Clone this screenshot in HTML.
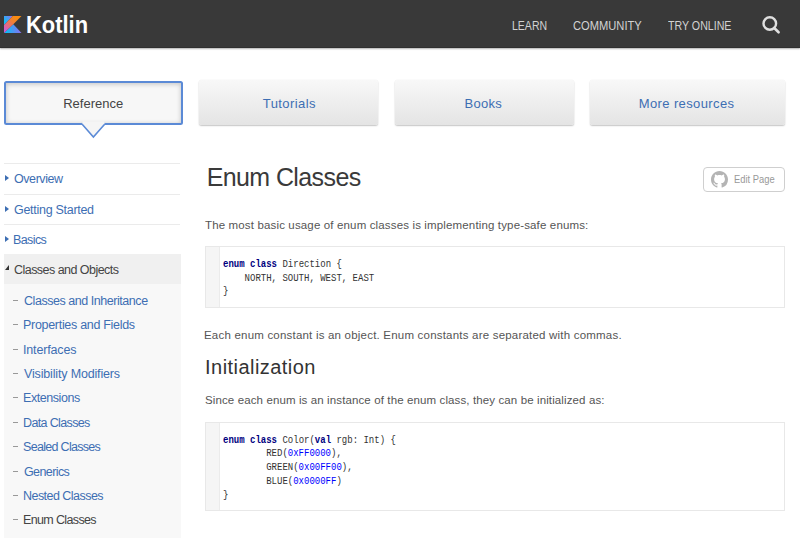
<!DOCTYPE html>
<html><head><meta charset="utf-8">
<style>
html,body{margin:0;padding:0;background:#fff;width:800px;height:538px;overflow:hidden;position:relative;font-family:"Liberation Sans",sans-serif;}
.t{position:absolute;white-space:pre;line-height:1;}
.code{position:absolute;white-space:pre;font-family:"Liberation Mono",monospace;font-size:10.5px;line-height:13.75px;color:#333;letter-spacing:0px;transform:scaleX(0.857);transform-origin:0 0;}
.kw{color:#000080;font-weight:700;}
.num{color:#0000ff;}
.box{position:absolute;box-sizing:border-box;}
#header{left:0;top:0;width:800px;height:48px;background:#393939;border-bottom:1px solid #303030;box-shadow:0 1px 1.5px rgba(0,0,0,.3);}
.logo{position:absolute;left:4px;top:16px;}
.search{position:absolute;left:761px;top:15px;}
.tab{top:80px;height:44.5px;border-radius:2.5px;background:linear-gradient(#f8f8f8,#e4e4e4);box-shadow:0 1px 1.5px rgba(0,0,0,.22),0 0 1px rgba(0,0,0,.12);}
#tab1{left:4px;top:81px;width:179px;height:44px;background:#f7f7f7;border:2px solid #5b8ad6;box-shadow:inset 0 1px 5px rgba(0,0,0,.22);}
.sep{position:absolute;left:4px;width:176px;height:1px;background:#ebebeb;}
.tri{position:absolute;width:0;height:0;}
.dash{position:absolute;left:12.6px;width:5px;height:1px;background:#999;}
.codebox{position:absolute;left:205px;width:580px;border:1px solid #e8e8e8;background:#fff;box-sizing:border-box;}
.gutter{position:absolute;left:0;top:0;bottom:0;width:13px;background:#f5f5f5;border-right:1px solid #ebebeb;}
#editbtn{left:703px;top:167px;width:82px;height:25px;border:1px solid #cfcfcf;border-radius:4px;}
.gh{position:absolute;left:711px;top:171px;}
</style></head><body>
<div class="box" id="header"></div>
<svg class="logo" width="17.5" height="17" viewBox="0 0 60 60" preserveAspectRatio="none">
<defs>
<linearGradient id="ga" x1="0" y1="45" x2="60" y2="45" gradientUnits="userSpaceOnUse"><stop offset=".15" stop-color="#12baf6"/><stop offset=".55" stop-color="#4d95f2"/><stop offset="1" stop-color="#8a6ef0"/></linearGradient>
<linearGradient id="gb" x1="0" y1="30" x2="30" y2="0" gradientUnits="userSpaceOnUse"><stop offset=".2" stop-color="#10bdf7"/><stop offset=".6" stop-color="#4a9af3"/><stop offset="1" stop-color="#9a6aee"/></linearGradient>
<linearGradient id="gc" x1="0" y1="60" x2="60" y2="0" gradientUnits="userSpaceOnUse"><stop offset=".1" stop-color="#c85bd8"/><stop offset=".3" stop-color="#df6a8c"/><stop offset=".55" stop-color="#ee7e3a"/><stop offset=".8" stop-color="#f88b10"/></linearGradient>
</defs>
<path fill="url(#ga)" d="M0 60L32 29.5L60 60z"/>
<path fill="url(#gb)" d="M0 0h30.1L0 32z"/>
<path fill="url(#gc)" d="M30.1 0L0 31.7V60L32 29.5L60 0z"/>
</svg>
<svg class="search" width="22" height="22" viewBox="0 0 22 22"><circle cx="8.8" cy="8.5" r="6.3" fill="none" stroke="#dfdfdf" stroke-width="2.4"/><line x1="13.2" y1="13" x2="17.6" y2="17.3" stroke="#dfdfdf" stroke-width="2.6" stroke-linecap="round"/></svg>
<div class="box tab" id="tab1"></div>
<svg style="position:absolute;left:0;top:0" width="200" height="140"><path d="M81.3 123.3 L93.4 137 L105.5 123.3" fill="#f5f5f5" stroke="#5b8ad6" stroke-width="1.6"/><rect x="82.6" y="121.5" width="21.8" height="2.6" fill="#f5f5f5"/></svg>
<div class="box tab" style="left:199.3px;width:179px;"></div>
<div class="box tab" style="left:394.5px;width:179.3px;"></div>
<div class="box tab" style="left:589.7px;width:195.3px;"></div>
<div class="sep" style="top:163px"></div>
<div class="sep" style="top:194px"></div>
<div class="sep" style="top:224px"></div>
<div class="box" style="left:4px;top:254px;width:176.5px;height:30px;background:#f0f0f0;"></div>
<div class="box" style="left:4px;top:284px;width:176.5px;height:260px;background:#f8f8f8;"></div>
<div class="tri" style="left:5px;top:175px;border-left:4px solid #3d6eb3;border-top:3px solid transparent;border-bottom:3px solid transparent;"></div>
<div class="tri" style="left:5px;top:206px;border-left:4px solid #3d6eb3;border-top:3px solid transparent;border-bottom:3px solid transparent;"></div>
<div class="tri" style="left:5px;top:236px;border-left:4px solid #3d6eb3;border-top:3px solid transparent;border-bottom:3px solid transparent;"></div>
<div class="tri" style="left:4.5px;top:265.2px;border-right:4.5px solid #333;border-top:5px solid transparent;"></div>
<div class="dash" style="top:300px"></div>
<div class="dash" style="top:324px"></div>
<div class="dash" style="top:349px"></div>
<div class="dash" style="top:373px"></div>
<div class="dash" style="top:397px"></div>
<div class="dash" style="top:422px"></div>
<div class="dash" style="top:446px"></div>
<div class="dash" style="top:471px"></div>
<div class="dash" style="top:495px"></div>
<div class="dash" style="top:519px"></div>
<div class="box" id="editbtn"></div>
<svg class="gh" width="17" height="17" viewBox="0 0 16 16"><path fill="#b4b4b4" d="M8 0C3.58 0 0 3.58 0 8c0 3.54 2.29 6.53 5.47 7.59.4.07.55-.17.55-.38 0-.19-.01-.82-.01-1.49-2.01.37-2.53-.49-2.69-.94-.09-.23-.48-.94-.82-1.13-.28-.15-.68-.52-.01-.53.63-.01 1.08.58 1.23.82.72 1.21 1.87.87 2.33.66.07-.52.28-.87.51-1.07-1.780-.2-3.640-.89-3.640-3.950 0-.87.31-1.590.82-2.150-.08-.2-.36-1.020.08-2.120 0 0 .67-.21 2.200.82.64-.18 1.320-.27 2-.27.68 0 1.360.09 2 .27 1.530-1.040 2.200-.82 2.200-.82.44 1.100.16 1.920.08 2.120.51.56.82 1.270.82 2.150 0 3.070-1.870 3.750-3.650 3.950.29.25.54.73.54 1.480 0 1.070-.01 1.930-.01 2.200 0 .21.15.46.55.38A8.013 8.013 0 0016 8c0-4.42-3.58-8-8-8z"/></svg>
<div class="codebox" style="top:246px;height:62px;"><div class="gutter"></div></div>
<div class="codebox" style="top:422px;height:89px;"><div class="gutter"></div></div>
<div class="code" style="left:223.00px;top:257.83px"><b class="kw">enum</b> <b class="kw">class</b> Direction {</div>
<div class="code" style="left:223.00px;top:271.58px">    NORTH, SOUTH, WEST, EAST</div>
<div class="code" style="left:223.00px;top:285.33px">}</div>
<div class="code" style="left:223.00px;top:433.53px"><b class="kw">enum</b> <b class="kw">class</b> Color(<b class="kw">val</b> rgb: Int) {</div>
<div class="code" style="left:223.00px;top:447.28px">        RED(<span class="num">0xFF0000</span>),</div>
<div class="code" style="left:223.00px;top:461.03px">        GREEN(<span class="num">0x00FF00</span>),</div>
<div class="code" style="left:223.00px;top:474.78px">        BLUE(<span class="num">0x0000FF</span>)</div>
<div class="code" style="left:223.00px;top:488.53px">}</div>
<div class="t" id="kotlin" style="left:26.00px;top:14.01px;font-size:23.00px;color:#fff;font-weight:700;letter-spacing:0.000px;transform:scaleX(0.9524);transform-origin:0 0">Kotlin</div>
<div class="t" id="learn" style="left:511.80px;top:19.00px;font-size:13.00px;color:#d2d2d2;font-weight:400;letter-spacing:0.000px;transform:scaleX(0.8095);transform-origin:0 0">LEARN</div>
<div class="t" id="community" style="left:573.00px;top:19.00px;font-size:13.00px;color:#d2d2d2;font-weight:400;letter-spacing:0.000px;transform:scaleX(0.8575);transform-origin:0 0">COMMUNITY</div>
<div class="t" id="tryonline" style="left:668.30px;top:19.00px;font-size:13.00px;color:#d2d2d2;font-weight:400;letter-spacing:0.000px;transform:scaleX(0.8185);transform-origin:0 0">TRY ONLINE</div>
<div class="t" id="tx_tab1" style="left:63.20px;top:96.50px;font-size:13.00px;color:#444;font-weight:400;letter-spacing:0.000px">Reference</div>
<div class="t" id="tx_tab2" style="left:262.80px;top:96.50px;font-size:13.00px;color:#3d6eb3;font-weight:400;letter-spacing:0.425px">Tutorials</div>
<div class="t" id="tx_tab3" style="left:464.50px;top:96.50px;font-size:13.00px;color:#3d6eb3;font-weight:400;letter-spacing:0.250px">Books</div>
<div class="t" id="tx_tab4" style="left:638.75px;top:96.50px;font-size:13.00px;color:#3d6eb3;font-weight:400;letter-spacing:0.384px">More resources</div>
<div class="t" id="s1" style="left:14.00px;top:173.01px;font-size:12.50px;color:#3d6eb3;font-weight:400;letter-spacing:-0.429px">Overview</div>
<div class="t" id="s2" style="left:14.00px;top:203.71px;font-size:12.50px;color:#3d6eb3;font-weight:400;letter-spacing:-0.286px">Getting Started</div>
<div class="t" id="s3" style="left:13.00px;top:233.51px;font-size:12.50px;color:#3d6eb3;font-weight:400;letter-spacing:-0.600px">Basics</div>
<div class="t" id="s4" style="left:14.00px;top:263.60px;font-size:12.50px;color:#444;font-weight:400;letter-spacing:-0.534px">Classes and Objects</div>
<div class="t" id="sub0" style="left:24.00px;top:294.80px;font-size:12.50px;color:#3d6eb3;font-weight:400;letter-spacing:-0.455px">Classes and Inheritance</div>
<div class="t" id="sub1" style="left:23.00px;top:319.21px;font-size:12.50px;color:#3d6eb3;font-weight:400;letter-spacing:-0.300px">Properties and Fields</div>
<div class="t" id="sub2" style="left:23.00px;top:343.60px;font-size:12.50px;color:#3d6eb3;font-weight:400;letter-spacing:-0.157px">Interfaces</div>
<div class="t" id="sub3" style="left:24.00px;top:368.01px;font-size:12.50px;color:#3d6eb3;font-weight:400;letter-spacing:-0.158px">Visibility Modifiers</div>
<div class="t" id="sub4" style="left:23.00px;top:392.41px;font-size:12.50px;color:#3d6eb3;font-weight:400;letter-spacing:-0.445px">Extensions</div>
<div class="t" id="sub5" style="left:23.00px;top:416.80px;font-size:12.50px;color:#3d6eb3;font-weight:400;letter-spacing:-0.636px">Data Classes</div>
<div class="t" id="sub6" style="left:23.00px;top:441.21px;font-size:12.50px;color:#3d6eb3;font-weight:400;letter-spacing:-0.692px">Sealed Classes</div>
<div class="t" id="sub7" style="left:24.00px;top:465.60px;font-size:12.50px;color:#3d6eb3;font-weight:400;letter-spacing:-0.599px">Generics</div>
<div class="t" id="sub8" style="left:23.00px;top:490.01px;font-size:12.50px;color:#3d6eb3;font-weight:400;letter-spacing:-0.538px">Nested Classes</div>
<div class="t" id="sub9" style="left:23.00px;top:514.41px;font-size:12.50px;color:#444;font-weight:400;letter-spacing:-0.635px">Enum Classes</div>
<div class="t" id="h1" style="left:206.65px;top:165.41px;font-size:25.00px;color:#3a3a3a;font-weight:400;letter-spacing:-0.600px">Enum Classes</div>
<div class="t" id="edit" style="left:734.30px;top:173.81px;font-size:11.00px;color:#999;font-weight:400;letter-spacing:0.000px;transform:scaleX(0.8515);transform-origin:0 0">Edit Page</div>
<div class="t" id="p1" style="left:205.00px;top:219.91px;font-size:11.50px;color:#555;font-weight:400;letter-spacing:0.147px">The most basic usage of enum classes is implementing type-safe enums:</div>
<div class="t" id="p2" style="left:204.00px;top:330.25px;font-size:11.50px;color:#555;font-weight:400;letter-spacing:0.204px">Each enum constant is an object. Enum constants are separated with commas.</div>
<div class="t" id="h2" style="left:205.10px;top:357.40px;font-size:20.00px;color:#333;font-weight:400;letter-spacing:0.448px">Initialization</div>
<div class="t" id="p3" style="left:205.00px;top:394.91px;font-size:11.50px;color:#555;font-weight:400;letter-spacing:0.117px">Since each enum is an instance of the enum class, they can be initialized as:</div>
</body></html>
